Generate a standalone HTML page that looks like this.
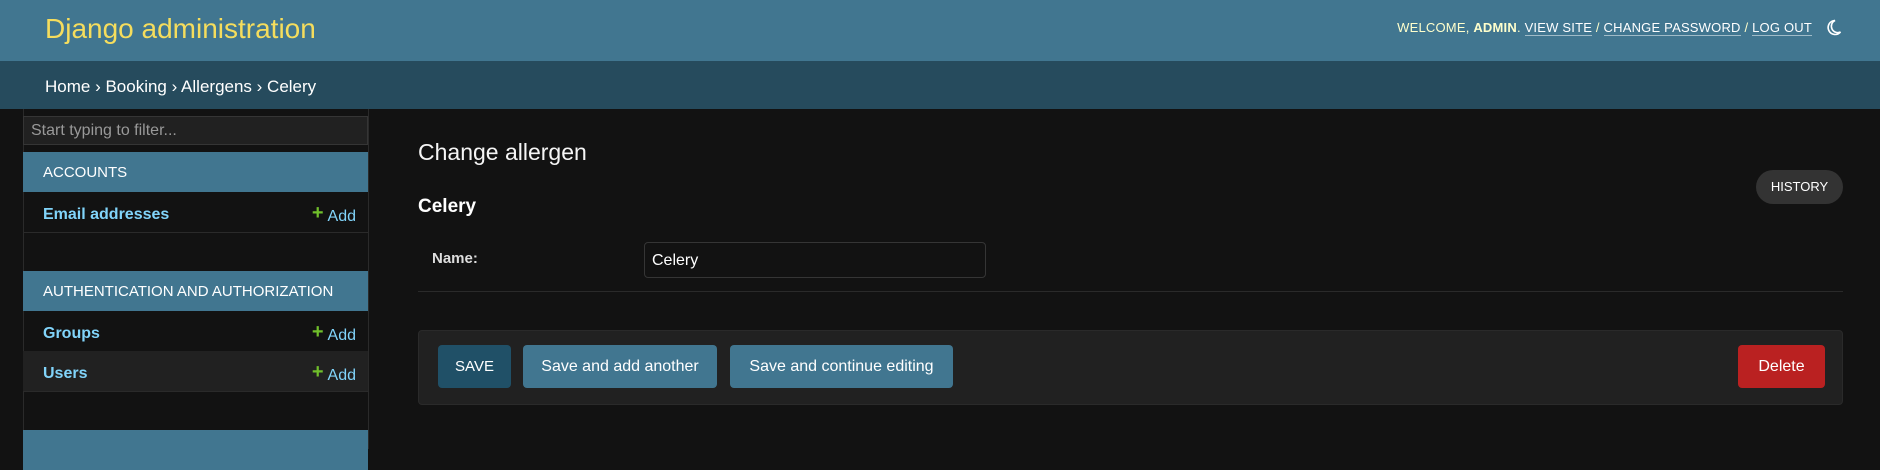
<!DOCTYPE html>
<html><head><meta charset="utf-8"><style>
*{box-sizing:border-box;margin:0;padding:0}
body{width:1880px;height:442px;overflow:hidden;background:#121212;font-family:"Liberation Sans",sans-serif;color:#eee;position:relative}
.abs{position:absolute}
#header{left:0;top:0;width:1880px;height:61px;background:#417690}
#brand{left:45px;top:13px;font-size:28px;color:#f5dd5d;font-weight:300}
#tools{right:68px;top:20px;font-size:13px;color:#ffc;letter-spacing:0.2px}
#tools a{color:#fff;text-decoration:none;border-bottom:1px solid rgba(255,255,255,.5)}
#bc{left:0;top:61px;width:1880px;height:48px;background:#264b5d;color:#fff;font-size:17px;padding:16px 45px 0}
#side{left:23px;top:109px;width:346px;height:340px;border-right:1px solid #2a2a2a;border-left:1px solid #2a2a2a}
.filter{left:23px;top:116px;width:345px;height:29px;background:#212121;border:1px solid #353535;color:#999;font-size:16px;padding:5px 7px}
.cap{left:23px;width:345px;height:40px;background:#417690;color:#fff;font-size:15px;padding:12px 20px}
.row{left:23px;width:345px;height:41px;border-bottom:1px solid #2a2a2a;color:#81d4fa;font-size:16px;font-weight:bold;padding:14px 20px 0}
.row span{position:absolute;right:12px;top:12px;font-weight:normal;color:#81d4fa}
.row span b{color:#70bf2b;font-size:20px;margin-right:4px;position:relative;top:-2px}
.btn{top:345px;height:43px;border-radius:4px;color:#fff;font-size:16px;text-align:center;line-height:43px}
</style></head><body>
<div id="header" class="abs"></div>
<div id="brand" class="abs">Django administration</div>
<div id="tools" class="abs">WELCOME, <b>ADMIN</b>. <a>VIEW SITE</a> / <a>CHANGE PASSWORD</a> / <a>LOG OUT</a></div>
<svg class="abs" style="left:1826px;top:19px" width="16" height="18" viewBox="0 0 16 18"><path d="M9 1.5A7 7 0 1 0 14.5 13 6 6 0 0 1 9 1.5Z" fill="none" stroke="#fff" stroke-width="1.6"/></svg>
<div id="bc" class="abs">Home › Booking › Allergens › Celery</div>
<div id="side" class="abs"></div>
<div class="abs filter">Start typing to filter...</div>
<div class="abs cap" style="top:152px">ACCOUNTS</div>
<div class="abs row" style="top:192px">Email addresses<span><b>+</b>Add</span></div>
<div class="abs cap" style="top:271px">AUTHENTICATION AND AUTHORIZATION</div>
<div class="abs row" style="top:311px">Groups<span><b>+</b>Add</span></div>
<div class="abs row" style="top:351px;background:#212121">Users<span><b>+</b>Add</span></div>
<div class="abs cap" style="top:430px"></div>
<div class="abs" style="left:418px;top:139px;font-size:23px;font-weight:300;color:#f5f5f5">Change allergen</div>
<div class="abs" style="left:1756px;top:170px;width:87px;height:34px;border-radius:17px;background:#333;color:#fff;font-size:13px;text-align:center;line-height:34px">HISTORY</div>
<div class="abs" style="left:418px;top:196px;font-size:19px;font-weight:bold;color:#fff">Celery</div>
<div class="abs" style="left:432px;top:250px;font-size:15px;font-weight:bold;color:#ddd">Name:</div>
<div class="abs" style="left:644px;top:242px;width:342px;height:36px;border:1px solid #353535;border-radius:4px;background:#121212;font-size:16px;color:#fff;padding:9px 7px">Celery</div>
<div class="abs" style="left:418px;top:291px;width:1425px;height:1px;background:#2a2a2a"></div>
<div class="abs" style="left:418px;top:330px;width:1425px;height:75px;background:#212121;border:1px solid #2a2a2a;border-radius:4px"></div>
<div class="abs btn" style="left:438px;width:73px;background:#205067;font-size:15px">SAVE</div>
<div class="abs btn" style="left:523px;width:194px;background:#417690">Save and add another</div>
<div class="abs btn" style="left:730px;width:223px;background:#417690">Save and continue editing</div>
<div class="abs btn" style="left:1738px;width:87px;background:#ba2121">Delete</div>
</body></html>
